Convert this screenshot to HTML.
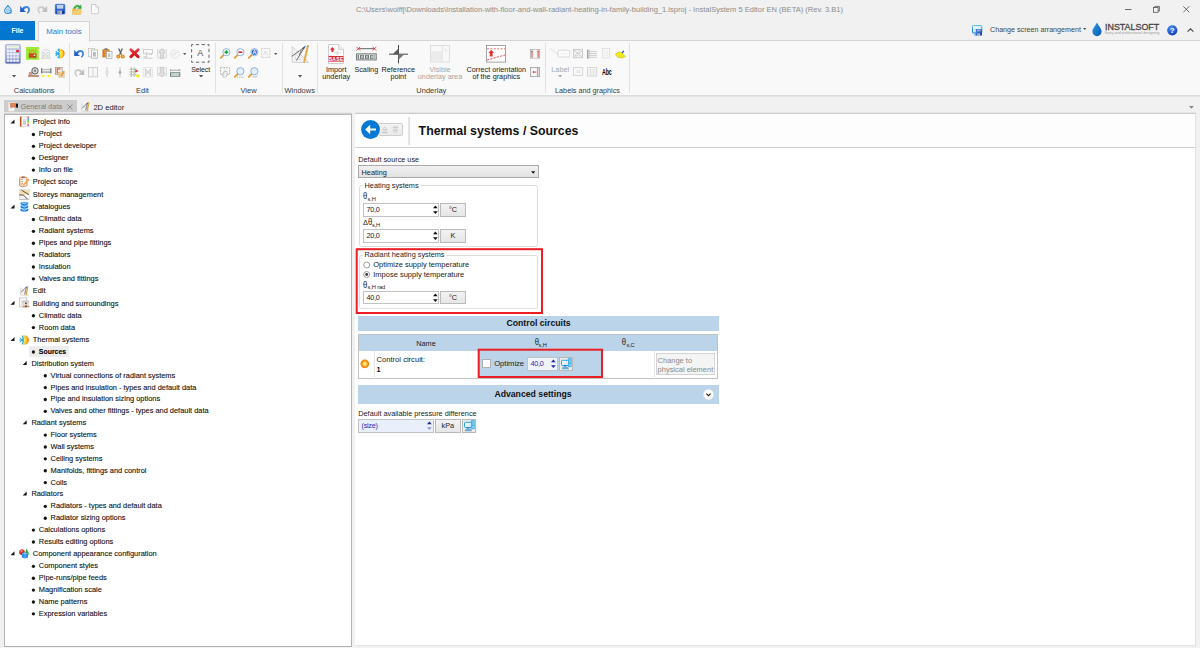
<!DOCTYPE html>
<html lang="en"><head><meta charset="utf-8"><title>InstalSystem 5 Editor</title>
<style>

html,body{margin:0;padding:0;}
body{width:1200px;height:648px;position:relative;overflow:hidden;background:#f1f1f1;font-family:"Liberation Sans",sans-serif;font-size:7.3px;color:#1a1a1a;line-height:9px;}
.a{position:absolute;white-space:nowrap;}
.c{position:absolute;white-space:nowrap;text-align:center;transform:translateX(-50%);}
svg{position:absolute;overflow:visible;}
#title{left:356px;top:5px;color:#8c8c8c;font-size:7.55px;}
#ribbon{left:0;top:40px;width:1200px;height:54px;background:#f9f9f9;border-top:1px solid #d4d4d4;border-bottom:1px solid #dcdcdc;box-shadow:0 1px 0 #e5e5e5;box-sizing:content-box;}
#filetab{left:0;top:21px;width:35px;height:19px;background:#0377cf;color:#fff;text-align:center;line-height:19.6px;font-size:6.95px;font-weight:bold;}
#maintab{left:38px;top:21px;width:50px;height:20px;background:#f9f9f9;border:1px solid #d4d4d4;border-bottom:none;color:#2a7bd0;text-align:center;line-height:19px;font-size:7.8px;}
.sep{position:absolute;top:43px;width:1px;height:50px;background:#e0e1e1;}
.gl{top:86px;color:#3a3a3a;font-size:7.5px;}
.bl{color:#222;}
.dis{color:#a6a6a6;}
.dd{position:absolute;width:0;height:0;border-left:2px solid transparent;border-right:2px solid transparent;border-top:2.2px solid #555;}
#doctab1{left:4px;top:100px;width:73px;height:14px;background:#cccccc;}
#lp{left:4px;top:114px;width:346px;height:531px;background:#fff;border:1px solid #b2b2b2;border-top-color:#b8b8b8;box-sizing:content-box;box-shadow:0 -1px 0 #d4d4d4,0 -2px 0 #e8e8e8;}
#rp{left:355px;top:113px;width:840px;height:531px;background:#fff;border-top:1px solid #cacaca;border-right:1px solid #e2e2e2;border-bottom:1px solid #e2e2e2;box-shadow:0 -1px 0 #e6e6e6;}
#rph{left:355px;top:114px;width:840px;height:33px;background:#fdfdfd;border-bottom:1px solid #cfcfcf;}
.t{position:absolute;white-space:nowrap;height:12px;line-height:12px;color:#0c0c0c;font-size:7.42px;-webkit-text-stroke:0.09px #0c0c0c;}
.b{position:absolute;width:3.2px;height:3.2px;border-radius:50%;background:#111;}
.ex{position:absolute;width:0;height:0;border-left:4.2px solid transparent;border-bottom:4.2px solid #333;}
.inp{position:absolute;background:#fff;border:1px solid #c2c2c2;box-sizing:border-box;line-height:11px;padding-left:2.5px;color:#222;letter-spacing:-0.3px;}
.btn{position:absolute;background:linear-gradient(#f2f2f2,#e6e6e6);border:1px solid #bababa;box-sizing:border-box;text-align:center;line-height:11.5px;color:#222;}
.grp{position:absolute;border:1px solid #dddddd;border-radius:2.5px;box-sizing:border-box;}
.leg{position:absolute;background:#fff;padding:0 2px;line-height:9px;white-space:nowrap;}
.bh{position:absolute;background:#bcd4e9;text-align:center;font-weight:bold;color:#111;}
.red{position:absolute;border:1.7px solid #e0202a;box-sizing:border-box;}
.sp{position:absolute;width:0;height:0;border-left:1.9px solid transparent;border-right:1.9px solid transparent;}
.spu{border-bottom:2.4px solid #111;}
.spd{border-top:2.4px solid #111;}
sub{font-size:5.7px;vertical-align:baseline;position:relative;top:1.5px;line-height:0;letter-spacing:-0.1px;}
.th{font-size:8.5px;line-height:0;display:inline-block;transform:scaleX(0.9);transform-origin:0 50%;margin-right:-0.5px;}

</style></head>
<body>
<div class="a" id="title">C:\Users\wolffj\Downloads\Installation-with-floor-and-wall-radiant-heating-in-family-building_1.isproj - InstalSystem 5 Editor EN (BETA) (Rev. 3.B1)</div>
<svg style="left:3.6px;top:4.8px" width="8" height="9.2" viewBox="0 0 8 9.2"><path d="M3.9 0.6 C5 2.2 7.3 3.6 7.3 5.6 C7.3 7.4 5.8 8.6 3.9 8.6 C2 8.6 0.6 7.4 0.6 5.6 C0.6 3.6 2.8 2.2 3.9 0.6 Z" fill="none" stroke="#2f8fd8" stroke-width="1.05"/><path d="M5.2 4.4 C3.6 3.4 2.4 4.6 2.6 5.8 C2.8 7 4 7.2 4.6 6.8" fill="none" stroke="#2f8fd8" stroke-width="0.8"/><path d="M4.6 5.6 H7 V8.8 M5.6 6.6 V8.8" stroke="#36a6e4" stroke-width="0.8" fill="none"/></svg>
<svg style="left:20px;top:5px" width="10.4" height="9" viewBox="0 0 10.4 9"><defs><linearGradient id="ug1" x1="0" y1="1" x2="1" y2="0"><stop offset="0" stop-color="#1438bc"/><stop offset="1" stop-color="#4aa4f4"/></linearGradient></defs><path d="M0.2 0.8 L0.2 7 L6 7 L3.9 4.9 C5 2.4 7.8 2.2 8.2 4.6 C8.4 6 8 7 6.9 7.9 L7.3 8.7 C8.9 8 10.1 6.4 10 4.2 C9.8 0 4 0.2 2.3 3.2 Z" fill="url(#ug1)"/></svg>
<svg style="left:37.2px;top:5px" width="10.4" height="9" viewBox="0 0 10.4 9"><defs><linearGradient id="ug2" x1="0" y1="1" x2="1" y2="0"><stop offset="0" stop-color="#b4b4b4"/><stop offset="1" stop-color="#d8d8d8"/></linearGradient></defs><g transform="translate(10.4,0) scale(-1,1)"><path d="M0.2 0.8 L0.2 7 L6 7 L3.9 4.9 C5 2.4 7.8 2.2 8.2 4.6 C8.4 6 8 7 6.9 7.9 L7.3 8.7 C8.9 8 10.1 6.4 10 4.2 C9.8 0 4 0.2 2.3 3.2 Z" fill="url(#ug2)"/></g></svg>
<svg style="left:55px;top:4px" width="10.2" height="10.4" viewBox="0 0 10.2 10.4"><defs><linearGradient id="svg1" x1="0" y1="0" x2="0" y2="1"><stop offset="0" stop-color="#4a8cec"/><stop offset="1" stop-color="#143cb4"/></linearGradient></defs><rect x="0.3" y="0.3" width="9.6" height="9.8" rx="1.1" fill="url(#svg1)" stroke="#2a58c8" stroke-width="0.6"/><rect x="2" y="1" width="6.2" height="3.6" fill="#cfdcf0"/><path d="M2.6 1.8h5M2.6 2.8h5M2.6 3.8h5" stroke="#aebfdc" stroke-width="0.4"/><rect x="2.4" y="6.6" width="4.6" height="3.6" fill="#b9c0cc"/><rect x="3.4" y="7.4" width="1.2" height="2.4" fill="#6a7486"/><rect x="7.6" y="7.2" width="1" height="2" fill="#0c1c54"/></svg>
<svg style="left:72.3px;top:4px" width="11" height="10.6" viewBox="0 0 11 10.6"><path d="M1.4 5.6 C1.4 1.6 5.4 -0.4 8 2 L9 0.8 L9.4 4.8 L5.6 4.6 L6.8 3.2 C5.4 2 3.4 3 3.2 5.6 Z" fill="#2fb040" stroke="#189030" stroke-width="0.3"/><path d="M5.8 1 C4.6 1 3.4 1.8 2.8 3" stroke="#9ae8a0" stroke-width="0.6" fill="none"/><path d="M0.3 4.6 H3.4 L4.2 5.6 H9 V10.3 H0.3 Z" fill="#e8b64a"/><path d="M0.3 10.3 L1.8 6.6 H10.6 L9 10.3 Z" fill="#f4d070"/><path d="M0.3 10.3 H9" stroke="#d8a83a" stroke-width="0.4"/></svg>
<svg style="left:91.2px;top:4.3px" width="8" height="10.2" viewBox="0 0 8 10.2"><path d="M0.5 0.5 H4.8 L7.4 3.1 V9.7 H0.5 Z" fill="#fcfcfc" stroke="#c6c6c6" stroke-width="0.9"/><path d="M4.8 0.5 V3.1 H7.4" fill="#f0f0f0" stroke="#c6c6c6" stroke-width="0.7"/><path d="M2.6 6h2.4v-1.4" stroke="#e6e6e6" stroke-width="0.6" fill="none"/></svg>
<svg style="left:1125px;top:9px" width="7" height="1" viewBox="0 0 7 1"><rect x="0" y="0" width="6.5" height="0.8" fill="#4a4a4a"/></svg>
<svg style="left:1153.4px;top:5.8px" width="7" height="7" viewBox="0 0 7 7"><rect x="0.4" y="1.6" width="4.7" height="4.7" fill="none" stroke="#4a4a4a" stroke-width="0.75"/><path d="M1.8 1.6 V0.4 H6.4 V5 H5.1" fill="none" stroke="#4a4a4a" stroke-width="0.75"/></svg>
<svg style="left:1182.6px;top:6px" width="6.6" height="6.6" viewBox="0 0 6.6 6.6"><path d="M0.3 0.3 L6.3 6.3 M6.3 0.3 L0.3 6.3" stroke="#4a4a4a" stroke-width="0.8" fill="none"/></svg>
<div class="a" id="ribbon"></div>
<div class="a" id="filetab">File</div>
<div class="a" id="maintab">Main tools</div>
<svg style="left:971.6px;top:24.6px" width="10.8" height="10.8" viewBox="0 0 10.8 10.8"><defs><linearGradient id="mon1" x1="0" y1="0" x2="0" y2="1"><stop offset="0" stop-color="#4ab8ea"/><stop offset="1" stop-color="#0a74c6"/></linearGradient><linearGradient id="mon2" x1="0" y1="0" x2="1" y2="1"><stop offset="0" stop-color="#ffffff"/><stop offset="1" stop-color="#b4e2fa"/></linearGradient><linearGradient id="flp" x1="0" y1="0" x2="1" y2="1"><stop offset="0" stop-color="#5e9aea"/><stop offset="1" stop-color="#0a38ac"/></linearGradient></defs><rect x="0.5" y="0.6" width="9.3" height="7.4" rx="0.8" fill="url(#mon2)" stroke="url(#mon1)" stroke-width="1"/><path d="M2.2 9.9 H5" stroke="#2a96d8" stroke-width="0.9"/><rect x="3.7" y="4" width="6.3" height="6.5" rx="0.6" fill="url(#flp)"/><rect x="5.1" y="4.6" width="3.6" height="1.7" fill="#a4aec4"/><rect x="5.4" y="8.5" width="2.6" height="2" fill="#ececec"/><path d="M6.2 8.7 V10.4 M7.1 8.7 V10.4" stroke="#555" stroke-width="0.4"/><circle cx="4.5" cy="4.9" r="0.5" fill="#1a3cc0"/></svg>
<div class="a" style="left:990px;top:25.7px;color:#444;font-size:7.15px">Change screen arrangement</div>
<svg style="left:1083px;top:28.4px" width="3.4" height="2" viewBox="0 0 3.4 2"><path d="M0 0 H3.4 L1.7 1.9 Z" fill="#555"/></svg>
<svg style="left:1092px;top:21.5px" width="10" height="14.5" viewBox="0 0 10 14.5"><defs><linearGradient id="dg" x1="0" y1="0" x2="1" y2="1"><stop offset="0" stop-color="#2a9be8"/><stop offset="1" stop-color="#0a58b0"/></linearGradient></defs><path d="M5 0.3 C6 3.4 9.6 6.4 9.6 9.6 A4.6 4.6 0 0 1 0.4 9.6 C0.4 6.4 4 3.4 5 0.3 Z" fill="url(#dg)"/></svg>
<svg style="left:1104px;top:21.3px" width="58" height="15" viewBox="0 0 58 15"><text x="1" y="9" font-size="9.7" font-family="Liberation Sans, sans-serif" fill="#484444" stroke="#484444" stroke-width="0.32" textLength="54.2" lengthAdjust="spacingAndGlyphs">INSTALSOFT</text><text x="1" y="12.9" font-size="3.6" font-family="Liberation Sans, sans-serif" fill="#9c9c9c" textLength="54.4" lengthAdjust="spacingAndGlyphs">Easy and professional designing</text></svg>
<svg style="left:1166.5px;top:24.8px" width="10.6" height="10.6" viewBox="0 0 10.6 10.6"><defs><radialGradient id="hg" cx="0.4" cy="0.3" r="0.8"><stop offset="0" stop-color="#4a8cf0"/><stop offset="1" stop-color="#0c36b4"/></radialGradient></defs><circle cx="5.3" cy="5.3" r="5.1" fill="url(#hg)"/><text x="5.3" y="8.2" font-size="8" font-weight="bold" fill="#fff" text-anchor="middle" font-family="Liberation Sans, sans-serif">?</text></svg>
<svg style="left:1186.5px;top:28px" width="7" height="4" viewBox="0 0 7 4"><path d="M0.6 3.6 L3.5 0.8 L6.4 3.6" fill="none" stroke="#444" stroke-width="1.1"/></svg>
<div class="sep" style="left:69px"></div>
<div class="sep" style="left:215px"></div>
<div class="sep" style="left:282px"></div>
<div class="sep" style="left:317px"></div>
<div class="sep" style="left:545px"></div>
<div class="sep" style="left:629px"></div>
<div class="c gl" style="left:34.2px;top:86px;">Calculations</div>
<div class="c gl" style="left:142.5px;top:86px;">Edit</div>
<div class="c gl" style="left:248.5px;top:86px;">View</div>
<div class="c gl" style="left:299.7px;top:86px;">Windows</div>
<div class="c gl" style="left:431.3px;top:86px;">Underlay</div>
<div class="c gl" style="left:587.5px;top:86px;font-size:7.25px">Labels and graphics</div>
<svg style="left:5.4px;top:44px" width="15.8" height="20" viewBox="0 0 15.8 20"><defs><linearGradient id="cg" x1="0" y1="0" x2="0" y2="1"><stop offset="0" stop-color="#d2d8f2"/><stop offset="0.5" stop-color="#a8b2e0"/><stop offset="1" stop-color="#6c7cc0"/></linearGradient></defs><rect x="0.4" y="0.4" width="15" height="19.2" rx="1.4" fill="url(#cg)" stroke="#8a94cc" stroke-width="0.6"/><rect x="1.8" y="1.4" width="12.2" height="3" fill="#fbfdf6" stroke="#a8b0c8" stroke-width="0.3"/><path d="M2.4 2.9h11" stroke="#b8d4a8" stroke-width="0.6"/><rect x="1.8" y="5.9" width="2.6" height="2.3" rx="0.4" fill="#eef0fa"/><rect x="4.95" y="5.9" width="2.6" height="2.3" rx="0.4" fill="#eef0fa"/><rect x="8.1" y="5.9" width="2.6" height="2.3" rx="0.4" fill="#eef0fa"/><rect x="11.25" y="5.9" width="2.6" height="2.3" rx="0.4" fill="#e0202c"/><rect x="1.8" y="9.100000000000001" width="2.6" height="2.3" rx="0.4" fill="#eef0fa"/><rect x="4.95" y="9.100000000000001" width="2.6" height="2.3" rx="0.4" fill="#eef0fa"/><rect x="8.1" y="9.100000000000001" width="2.6" height="2.3" rx="0.4" fill="#eef0fa"/><rect x="11.25" y="9.100000000000001" width="2.6" height="2.3" rx="0.4" fill="#eef0fa"/><rect x="1.8" y="12.3" width="2.6" height="2.3" rx="0.4" fill="#eef0fa"/><rect x="4.95" y="12.3" width="2.6" height="2.3" rx="0.4" fill="#eef0fa"/><rect x="8.1" y="12.3" width="2.6" height="2.3" rx="0.4" fill="#eef0fa"/><rect x="11.25" y="12.3" width="2.6" height="2.3" rx="0.4" fill="#eef0fa"/><rect x="1.8" y="15.500000000000002" width="2.6" height="2.3" rx="0.4" fill="#eef0fa"/><rect x="4.95" y="15.500000000000002" width="2.6" height="2.3" rx="0.4" fill="#eef0fa"/><rect x="8.1" y="15.500000000000002" width="2.6" height="2.3" rx="0.4" fill="#eef0fa"/><rect x="11.25" y="15.500000000000002" width="2.6" height="2.3" rx="0.4" fill="#eef0fa"/><path d="M1 18.6 H14.8" stroke="#5a68a8" stroke-width="0.8"/></svg>
<svg style="left:11.9px;top:75.1px" width="4.2" height="2.4" viewBox="0 0 4.2 2.4"><path d="M0 0 H4.2 L2.1 2.4 Z" fill="#555"/></svg>
<svg style="left:26.2px;top:47.2px" width="12.8" height="12.8" viewBox="0 0 12.8 12.8"><rect width="12.8" height="12.8" fill="#9cee36"/><path d="M2.6 6.2 L6.4 3 L10.2 6.2 M4 6 L7.6 2.6 M8.8 6 L5.2 2.6" fill="none" stroke="#e8862a" stroke-width="0.7"/><path d="M3.4 4.6 V2.2 M9.8 4.6 V1.8" stroke="#7a8a1c" stroke-width="0.5"/><path d="M9.8 1.8 L11.4 2.2 L9.8 2.8 Z" fill="#e8d21c"/><rect x="2.8" y="6.4" width="7.6" height="4.2" fill="#cc3a1e"/><path d="M2.8 8.4 H10.4" stroke="#e86a3a" stroke-width="0.5"/><rect x="7.6" y="7.4" width="1.7" height="1.6" fill="#c8e8b0"/><path d="M2.6 10.9 H10.8" stroke="#5a7a1c" stroke-width="0.5"/></svg>
<svg style="left:41.3px;top:48.4px" width="9.8" height="10.8" viewBox="0 0 9.8 10.8"><path d="M1.2 10 V3.6 C2.6 0.6 7.2 0.6 8.6 3.6 V10" fill="#f4f4f4" stroke="#cfcfcf" stroke-width="0.7"/><path d="M5 2 V10" stroke="#e0e0e0" stroke-width="0.7"/><path d="M2.8 4.4v1.2M2.8 7v1.6M6.8 4.4v1.2M6.8 7v1.6M3.6 5.8l1 1.4" stroke="#9a9a9a" stroke-width="0.6"/><path d="M0.2 10.2 H9.6" stroke="#c4c4c4" stroke-width="0.7"/></svg>
<svg style="left:55px;top:48px" width="10" height="11.2" viewBox="0 0 10 11.2"><defs><radialGradient id="sun1" cx="0.12" cy="0.5" r="0.95"><stop offset="0" stop-color="#fff45a"/><stop offset="0.45" stop-color="#ffc820"/><stop offset="0.8" stop-color="#f6801c"/><stop offset="1" stop-color="#f2701c" stop-opacity="0.7"/></radialGradient></defs><path d="M5 0.9 A4.7 4.7 0 0 1 5 10.3 Z" fill="url(#sun1)"/><path d="M4.1 0.6 V10.6 M0.8 3 L4.8 8.2 M0.8 8.2 L4.8 3 M0.3 5.6 H4.8 M2.6 1.4 L4.1 2.8 M2.6 9.8 L4.1 8.4" stroke="#2aace2" stroke-width="1.15" fill="none"/></svg>
<svg style="left:27.5px;top:66.6px" width="10.8" height="10.4" viewBox="0 0 10.8 10.4"><circle cx="7" cy="3.8" r="3.2" fill="#d9d9d9" stroke="#555" stroke-width="0.9"/><circle cx="7" cy="3.8" r="1.2" fill="#888"/><path d="M0.4 9.6 H10.4 V8.2 H0.4 Z" fill="#c58a70" stroke="#8a5a48" stroke-width="0.4"/><path d="M1.2 8.2 V5.4 H4 V8.2" fill="#d9a48c" stroke="#8a5a48" stroke-width="0.4"/></svg>
<svg style="left:40.8px;top:67.6px" width="10.6" height="10" viewBox="0 0 10.6 10"><defs><linearGradient id="pipg" x1="0" y1="0" x2="0" y2="1"><stop offset="0" stop-color="#9aa0a0"/><stop offset="0.4" stop-color="#eef0f0"/><stop offset="1" stop-color="#8a9090"/></linearGradient></defs><rect x="0.9" y="0.9" width="8.8" height="3.8" fill="url(#pipg)"/><path d="M0.7 0.2 V5.4 M9.9 0.2 V5.4" stroke="#56605e" stroke-width="1"/><path d="M0.4 8 L2.6 6.5 V7.4 H4.4 V8.6 H2.6 V9.5 Z" fill="#fff000"/><path d="M6 8 L8.2 6.5 V7.4 H10 V8.6 H8.2 V9.5 Z" fill="#fff000"/></svg>
<svg style="left:55px;top:66.6px" width="10.2" height="10.6" viewBox="0 0 10.2 10.6"><rect x="0.5" y="0.5" width="6.6" height="7" fill="#f7f3ee" stroke="#8c8c8c" stroke-width="0.7"/><path d="M5.4 1.9 H2.2 V6 H4" fill="none" stroke="#e2522a" stroke-width="1.2"/><rect x="3.4" y="4.8" width="6.4" height="5.4" fill="#e2cfb4" opacity="0.92"/><path d="M4.5 9.8 V5.2" stroke="#ecd41c" stroke-width="1.3"/><path d="M6.2 8.8 L9.2 4.2" stroke="#f2941c" stroke-width="1.5"/><path d="M3.4 10.2 H9.8" stroke="#c4a888" stroke-width="0.5"/></svg>
<svg style="left:74.2px;top:49.2px" width="10.4" height="9" viewBox="0 0 10.4 9"><defs><linearGradient id="ug3" x1="0" y1="1" x2="1" y2="0"><stop offset="0" stop-color="#1438bc"/><stop offset="1" stop-color="#4aa4f4"/></linearGradient></defs><path d="M0.2 0.8 L0.2 7 L6 7 L3.9 4.9 C5 2.4 7.8 2.2 8.2 4.6 C8.4 6 8 7 6.9 7.9 L7.3 8.7 C8.9 8 10.1 6.4 10 4.2 C9.8 0 4 0.2 2.3 3.2 Z" fill="url(#ug3)"/></svg>
<svg style="left:74.2px;top:67.6px" width="10.4" height="9" viewBox="0 0 10.4 9"><defs><linearGradient id="ug4" x1="0" y1="1" x2="1" y2="0"><stop offset="0" stop-color="#b4b4b4"/><stop offset="1" stop-color="#d8d8d8"/></linearGradient></defs><g transform="translate(10.4,0) scale(-1,1)"><path d="M0.2 0.8 L0.2 7 L6 7 L3.9 4.9 C5 2.4 7.8 2.2 8.2 4.6 C8.4 6 8 7 6.9 7.9 L7.3 8.7 C8.9 8 10.1 6.4 10 4.2 C9.8 0 4 0.2 2.3 3.2 Z" fill="url(#ug4)"/></g></svg>
<svg style="left:88px;top:48.4px" width="10" height="10.6" viewBox="0 0 10 10.6"><rect x="0.5" y="0.5" width="6" height="8.2" fill="#f6f6f6" stroke="#c4c4c4" stroke-width="0.8"/><rect x="3.4" y="2" width="6" height="8.2" fill="#fbfbfb" stroke="#b4b4b4" stroke-width="0.8"/><rect x="5" y="4" width="2.8" height="4.6" fill="#b8b8b8"/></svg>
<svg style="left:101.6px;top:48.2px" width="10.4" height="10.8" viewBox="0 0 10.4 10.8"><defs><linearGradient id="pg" x1="0" y1="0" x2="1" y2="0"><stop offset="0" stop-color="#c86a10"/><stop offset="0.4" stop-color="#f09a30"/><stop offset="1" stop-color="#d47a18"/></linearGradient></defs><rect x="0.5" y="1.2" width="7" height="8.2" rx="0.7" fill="url(#pg)"/><rect x="2.4" y="0.3" width="3.2" height="1.8" rx="0.5" fill="#7a7a7a"/><rect x="4.6" y="3.6" width="5.4" height="6.8" fill="#fafafa" stroke="#a4a4a4" stroke-width="0.7"/><rect x="6" y="5.4" width="2.4" height="3.6" fill="#c4c4c4"/></svg>
<svg style="left:116px;top:48.4px" width="9" height="10.8" viewBox="0 0 9 10.8"><path d="M2.6 0.6 L5.4 6.4 M6.4 0.6 L3.6 6.4" stroke="#5a5a5a" stroke-width="1.25" fill="none"/><circle cx="2.3" cy="8.5" r="1.5" fill="#f6b45a" stroke="#e0800c" stroke-width="1.1"/><circle cx="6.7" cy="8.5" r="1.5" fill="#f6b45a" stroke="#e0800c" stroke-width="1.1"/></svg>
<svg style="left:129px;top:48.4px" width="11" height="10.6" viewBox="0 0 11 10.6"><defs><linearGradient id="rx" x1="0" y1="0" x2="0" y2="1"><stop offset="0" stop-color="#f05a5a"/><stop offset="0.5" stop-color="#e01c24"/><stop offset="1" stop-color="#b00c14"/></linearGradient></defs><path d="M1.9 1.8 L9.1 8.8 M9.1 1.8 L1.9 8.8" stroke="url(#rx)" stroke-width="2.9" stroke-linecap="round" fill="none"/><path d="M1.9 1.8 L9.1 8.8 M9.1 1.8 L1.9 8.8" stroke="#e42028" stroke-width="2.3" stroke-linecap="round" fill="none" opacity="0.6"/></svg>
<svg style="left:143px;top:48.6px" width="10" height="10.4" viewBox="0 0 10 10.4"><rect x="0.6" y="0.6" width="8.8" height="4.2" fill="#f8f8f8" stroke="#c6c6c6" stroke-width="0.8"/><path d="M3.6 4.8 V9 M0.4 9.2 H9.6 M0.4 7.8 H3 M6.4 5.4 H9" stroke="#c2c2c2" stroke-width="0.8" fill="none"/><rect x="2.6" y="3.4" width="2" height="1.4" fill="#cfcfcf"/></svg>
<svg style="left:157px;top:48.4px" width="10" height="10.8" viewBox="0 0 10 10.8"><rect x="0.5" y="2" width="9" height="8" fill="#f4f4f4" stroke="#d2d2d2" stroke-width="0.7"/><path d="M3.4 10.4 V4.4 H1.8 L5 0.6 L8.2 4.4 H6.6 V10.4 Z" fill="#ececec" stroke="#bcbcbc" stroke-width="0.7"/><path d="M5 1.6 V10" stroke="#c8c8c8" stroke-width="0.6"/></svg>
<svg style="left:170.4px;top:48.8px" width="10" height="10" viewBox="0 0 10 10"><circle cx="5" cy="5" r="4.4" fill="#f6f6f6" stroke="#e2e2e2" stroke-width="0.8"/><path d="M2.4 7 C3.2 4.2 5.2 3 7.6 3.4 M4 6 L6.4 4" stroke="#e0e0e0" stroke-width="0.8" fill="none"/></svg>
<svg style="left:182.9px;top:52.6px" width="3.4" height="2" viewBox="0 0 3.4 2"><path d="M0 0 H3.4 L1.7 1.9 Z" fill="#555"/></svg>
<svg style="left:88px;top:67px" width="10" height="10.4" viewBox="0 0 10 10.4"><rect x="0.5" y="0.5" width="9" height="9.4" fill="#f6f6f6" stroke="#c8c8c8" stroke-width="0.8"/><path d="M5 0.5 V9.9" stroke="#c8c8c8" stroke-width="0.7"/></svg>
<svg style="left:103.6px;top:67px" width="6" height="10.4" viewBox="0 0 6 10.4"><path d="M3 0 V10.4" stroke="#c6c6c6" stroke-width="0.8"/><path d="M3 3 L4.6 5.2 L3 7.4 L1.4 5.2 Z" fill="#f4f4f4" stroke="#c0c0c0" stroke-width="0.6"/></svg>
<svg style="left:117.4px;top:67px" width="6" height="10.4" viewBox="0 0 6 10.4"><path d="M3 0 V10.4" stroke="#bdbdbd" stroke-width="0.8"/><path d="M3 3.4 L4.2 5.2 L3 7 L1.8 5.2 Z" fill="#aaa" stroke="#a4a4a4" stroke-width="0.6"/></svg>
<svg style="left:129px;top:66.8px" width="11" height="10.6" viewBox="0 0 11 10.6"><path d="M0.6 2.2 H8 M0.6 5 H8 M0.6 7.8 H8 M2.4 0.4 V10 M5.2 0.4 V10" stroke="#6a8f6a" stroke-width="0.7" stroke-dasharray="1.2 0.6" fill="none"/><path d="M6.4 2.4 L9.6 4 L6.4 5.6 Z" fill="#e0282a"/><rect x="7.4" y="7.6" width="3" height="2.6" fill="#ffe600"/></svg>
<svg style="left:143px;top:67px" width="10" height="10.4" viewBox="0 0 10 10.4"><rect x="0.5" y="0.5" width="9" height="9.4" fill="#f8f8f8" stroke="#cfcfcf" stroke-width="0.7" stroke-dasharray="1.6 1"/><path d="M2.4 1.6 L5 5.2 L2.4 8.8 Z M7.6 1.6 L5 5.2 L7.6 8.8 Z" fill="#e6e6e6" stroke="#bdbdbd" stroke-width="0.6"/></svg>
<svg style="left:157px;top:66.8px" width="10" height="10.8" viewBox="0 0 10 10.8"><rect x="0.5" y="0.8" width="9" height="8" fill="#f4f4f4" stroke="#d2d2d2" stroke-width="0.7"/><path d="M3.4 0.4 V6.4 H1.8 L5 10.2 L8.2 6.4 H6.6 V0.4 Z" fill="#ececec" stroke="#bcbcbc" stroke-width="0.7"/><path d="M5 0.8 V9.2" stroke="#c8c8c8" stroke-width="0.6"/></svg>
<svg style="left:170.2px;top:68.6px" width="10.4" height="8" viewBox="0 0 10.4 8"><path d="M0.6 1.2 H9.8 M0.6 0.2 V2.2 M9.8 0.2 V2.2" stroke="#7a8a8a" stroke-width="0.7" fill="none"/><rect x="0.6" y="3.8" width="9.2" height="3.4" fill="#f4f8f6" stroke="#4f6a68" stroke-width="0.9"/><path d="M1.6 5.5 H8.8" stroke="#9ab0ac" stroke-width="1" stroke-dasharray="1.2 0.8"/></svg>
<svg style="left:191.4px;top:44.2px" width="18.6" height="18.8" viewBox="0 0 18.6 18.8"><rect x="0.6" y="0.6" width="17.4" height="17.6" fill="none" stroke="#555" stroke-width="0.9" stroke-dasharray="3.3 2.5" stroke-dashoffset="1.6"/><text x="9.3" y="12.4" font-size="9" fill="#555" text-anchor="middle" font-family="Liberation Sans, sans-serif">A</text></svg>
<div class="c bl" style="left:200.6px;top:65.2px;font-size:7px;letter-spacing:-0.12px">Select</div>
<svg style="left:198.5px;top:75.1px" width="4.2" height="2.4" viewBox="0 0 4.2 2.4"><path d="M0 0 H4.2 L2.1 2.4 Z" fill="#555"/></svg>
<svg style="left:220px;top:48px" width="10.6" height="10.6" viewBox="0 0 10.6 10.6"><path d="M0.8 9.8 L4 6.6" stroke="#e39a2c" stroke-width="1.7" stroke-linecap="round"/><circle cx="6.4" cy="4.2" r="3.6" fill="#f4f9fe" stroke="#7aa2d0" stroke-width="0.8"/><path d="M4.5 4.2h3.8M6.4 2.3v3.8" stroke="#1fa030" stroke-width="1.5"/></svg>
<svg style="left:233.7px;top:48px" width="10.6" height="10.6" viewBox="0 0 10.6 10.6"><path d="M0.8 9.8 L4 6.6" stroke="#e39a2c" stroke-width="1.7" stroke-linecap="round"/><circle cx="6.4" cy="4.2" r="3.6" fill="#f4f9fe" stroke="#7aa2d0" stroke-width="0.8"/><path d="M4.4 4.2h4" stroke="#d81c24" stroke-width="1.5"/></svg>
<svg style="left:247.5px;top:48px" width="10.6" height="10.6" viewBox="0 0 10.6 10.6"><path d="M0.8 9.8 L4 6.6" stroke="#e39a2c" stroke-width="1.7" stroke-linecap="round"/><circle cx="6.4" cy="4.2" r="3.6" fill="#f4f9fe" stroke="#7aa2d0" stroke-width="0.8"/><circle cx="6.4" cy="4.2" r="2.6" fill="#2a62d4"/><text x="6.4" y="6.2" font-size="5.4" font-weight="bold" fill="#fff" text-anchor="middle" font-family="Liberation Sans, sans-serif">A</text></svg>
<svg style="left:261px;top:48.4px" width="9.4" height="10" viewBox="0 0 9.4 10"><rect x="0.5" y="0.5" width="8.4" height="9" fill="#f6f6f6" stroke="#c4c4c4" stroke-width="0.8" stroke-dasharray="1.6 1"/><path d="M2.4 6.8 L4.4 3.4 L6.4 6.8" stroke="#d0d0d0" stroke-width="0.7" fill="none"/></svg>
<svg style="left:273.7px;top:52.6px" width="3.4" height="2" viewBox="0 0 3.4 2"><path d="M0 0 H3.4 L1.7 1.9 Z" fill="#555"/></svg>
<svg style="left:220px;top:66.8px" width="10.4" height="10.4" viewBox="0 0 10.4 10.4"><rect x="0.6" y="0.6" width="9" height="7" fill="none" stroke="#9a9a9a" stroke-width="0.8" stroke-dasharray="1.6 1.2"/><path d="M3 10 V6.4 C3 5.4 4 5.4 4 6.2 V4.6 C4 3.8 5 3.8 5 4.6 V4.4 C5 3.6 6 3.6 6 4.4 V4.8 C6 4.2 7 4.2 7 5 V8 C7 9 6.4 10 5.6 10 Z" fill="#f2f2f2" stroke="#a8a8a8" stroke-width="0.6"/></svg>
<svg style="left:233.7px;top:66.6px" width="10.6" height="10.6" viewBox="0 0 10.6 10.6"><path d="M0.8 9.8 L4 6.6" stroke="#e39a2c" stroke-width="1.7" stroke-linecap="round"/><circle cx="6.4" cy="4.2" r="3.6" fill="#e4f0fb" stroke="#7aa2d0" stroke-width="0.8"/><path d="M3 10.2 H10" stroke="#8a8a8a" stroke-width="0.7" stroke-dasharray="1 0.8"/></svg>
<svg style="left:247.5px;top:66.6px" width="10.6" height="10.6" viewBox="0 0 10.6 10.6"><path d="M0.8 9.8 L4 6.6" stroke="#e39a2c" stroke-width="1.7" stroke-linecap="round"/><circle cx="6.4" cy="4.2" r="3.6" fill="#e4f0fb" stroke="#7aa2d0" stroke-width="0.8"/><path d="M4.6 9.4 C6 10.4 8.6 10.2 9.8 8.8" stroke="#9a9a9a" stroke-width="0.7" fill="none"/></svg>
<svg style="left:290.6px;top:44.8px" width="19" height="19.4" viewBox="0 0 19 19.4"><path d="M1.2 1.6 V17.4 H17.6 Z" fill="#f3f3f3" stroke="#cdcdcd" stroke-width="0.9"/><path d="M4.6 9 V14.4 H10.4 Z" fill="#fbfbfb" stroke="#d6d6d6" stroke-width="0.7"/><path d="M17.6 0.8 L14.2 15.6 L13 18 L12.8 15.4 L16.2 0.4 Z" fill="#f0b43c" stroke="#c98a1c" stroke-width="0.4"/><path d="M17.6 0.8 L16.2 0.4 L16 1.4 L17.4 1.8 Z" fill="#e07a6a"/><path d="M13.6 2 L0.8 11.4" stroke="#505050" stroke-width="0.85"/><path d="M13.6 2 L5.4 15.6" stroke="#505050" stroke-width="0.85"/><path d="M10.6 5.4 L8.4 10" stroke="#8a8a8a" stroke-width="1.3"/><path d="M15 0.4 L11.2 3 L12.8 4.6 Z" fill="#2a5fb8"/></svg>
<svg style="left:297.9px;top:75.1px" width="4.2" height="2.4" viewBox="0 0 4.2 2.4"><path d="M0 0 H4.2 L2.1 2.4 Z" fill="#555"/></svg>
<svg style="left:328.4px;top:44px" width="16" height="20" viewBox="0 0 16 20"><path d="M0.5 0.5 H10.6 L15.5 5.4 V19.5 H0.5 Z" fill="#fdfdfd" stroke="#c4c4c4" stroke-width="0.8"/><path d="M10.6 0.5 V5.4 H15.5" fill="#efefef" stroke="#c4c4c4" stroke-width="0.7"/><path d="M4.4 3 L6.8 5.8 H5.4 V8 H3.4 V5.8 H2 Z" fill="#e02a2a"/><circle cx="9.4" cy="8.8" r="1.3" fill="#fff" stroke="#c8c8c8" stroke-width="0.5"/><path d="M6 8.8 H13.4 M9.4 6 V11.4" stroke="#d2d2d2" stroke-width="0.5"/><rect x="0.5" y="12" width="15" height="5.6" fill="#d62a30"/><text x="8" y="16.6" font-size="5" font-weight="bold" fill="#fff" text-anchor="middle" font-family="Liberation Sans, sans-serif" letter-spacing="0.3">BASE</text></svg>
<div class="c bl" style="left:336.2px;top:65.2px;font-size:7.25px;line-height:7px;margin-top:1px">Import<br>underlay</div>
<svg style="left:355.8px;top:45.6px" width="20.8" height="14.6" viewBox="0 0 20.8 14.6"><path d="M2 2.7 H18.8" stroke="#3a3a3a" stroke-width="0.8"/><path d="M0.4 0.8 L4.2 4.6 M4.2 0.8 L0.4 4.6 M16.6 0.8 L20.4 4.6 M20.4 0.8 L16.6 4.6" stroke="#e8282c" stroke-width="0.8"/><rect x="0.6" y="7.9" width="19.6" height="6" fill="#fff" stroke="#5a6464" stroke-width="0.9"/><rect x="1.6" y="8.9" width="17.6" height="4" fill="#70787a"/><path d="M3.4 9 v3.8 M6 9.6 v2.6 M8.4 9 v3.8 M11 9.6 v2.6 M13.6 9 v3.8 M16 9.6v2.6 M18 9v3.8" stroke="#fff" stroke-width="1"/></svg>
<div class="c bl" style="left:366.3px;top:65.2px;font-size:7.25px">Scaling</div>
<svg style="left:389px;top:45px" width="19" height="18.4" viewBox="0 0 19 18.4"><path d="M9.5 0 V18.4 M0 9.2 H19" stroke="#333" stroke-width="0.9"/><path d="M9.5 9.2 H3.6 L9.5 3.6 Z" fill="#5a5a5a"/><path d="M9.5 9.2 H15.4 L9.5 14.8 Z" fill="#7a7a7a"/></svg>
<div class="c bl" style="left:398.3px;top:65.2px;font-size:7.25px;line-height:7px;margin-top:1px">Reference<br>point</div>
<svg style="left:430px;top:45px" width="20" height="17.6" viewBox="0 0 20 17.6"><rect x="0.5" y="0.5" width="19" height="16.6" fill="#f7f7f7" stroke="#d8d8d8" stroke-width="0.8"/><rect x="0.9" y="6" width="11.4" height="10.8" fill="#ebebeb"/><path d="M12.4 0.5 V17 " stroke="#dcdcdc" stroke-width="0.6"/><path d="M14.4 5.4 H17.4 M12.4 3 L13.4 3" stroke="#d4d4d4" stroke-width="0.6"/></svg>
<div class="c dis" style="left:440px;top:65.2px;font-size:7.25px;line-height:7px;margin-top:1px">Visible<br>underlay area</div>
<svg style="left:486px;top:45px" width="20" height="17.6" viewBox="0 0 20 17.6"><rect x="0.5" y="0.5" width="19" height="16.6" fill="#fff" stroke="#8e8e8e" stroke-width="0.8"/><path d="M1 3.8 H19" stroke="#e66a6a" stroke-width="1" stroke-dasharray="2 1.4"/><path d="M1 15 L19 10" stroke="#e03a3a" stroke-width="0.9" stroke-dasharray="2.2 1.2"/><path d="M5.2 4.8 L8 8 H6.6 V11.4 H3.8 V8 H2.4 Z" fill="#e0322e"/></svg>
<div class="c bl" style="left:496.3px;top:65.2px;font-size:7.25px;line-height:7px;margin-top:1px">Correct orientation<br>of the graphics</div>
<svg style="left:530.3px;top:49px" width="10.2" height="9.6" viewBox="0 0 10.2 9.6"><rect x="0.5" y="0.5" width="9.2" height="8.6" fill="#dcdcdc" stroke="#a8a8a8" stroke-width="0.7"/><rect x="3.4" y="0.8" width="3.4" height="8" fill="#fafafa"/><path d="M2 2 V8.4 M8.2 2 V8.4" stroke="#e04a3a" stroke-width="0.8"/><path d="M2 1.4 L1 3 H3 Z M8.2 1.4 L7.2 3 H9.2 Z" fill="#e04a3a"/></svg>
<svg style="left:530.3px;top:66.8px" width="10.2" height="10.2" viewBox="0 0 10.2 10.2"><rect x="0.5" y="0.5" width="9.2" height="9.2" fill="#e8e8e8" stroke="#9a9a9a" stroke-width="0.7"/><rect x="1.6" y="1.4" width="5" height="7.4" fill="#fafafa"/><path d="M7.8 0.8 V9.4" stroke="#8a8a8a" stroke-width="0.8"/><path d="M3 5.1 H6.4" stroke="#e03a3a" stroke-width="0.9"/><path d="M2.4 5.1 L4.2 3.8 V6.4 Z" fill="#e03a3a"/></svg>
<svg style="left:550px;top:48.4px" width="20.4" height="9.6" viewBox="0 0 20.4 9.6"><path d="M0.2 0.4 L8 6.4" stroke="#d0d0d0" stroke-width="0.7"/><rect x="8.2" y="2.2" width="11.6" height="6.8" rx="0.8" fill="#fcfcfc" stroke="#d2d2d2" stroke-width="0.8"/><path d="M11.4 5.8h1M13.6 5.8h1M15.8 5.8h1" stroke="#d0d0d0" stroke-width="0.7"/></svg>
<svg style="left:573.3px;top:48.4px" width="10.6" height="10.4" viewBox="0 0 10.6 10.4"><rect x="0.5" y="1.4" width="9" height="8.4" fill="#f2f2f2" stroke="#c2c2c2" stroke-width="0.8"/><path d="M0.8 1.8 L9.2 9.4 M2.6 6.8 L8.8 0.8 L10 2 L4 7.8 L2.2 8.2 Z" stroke="#c2c2c2" stroke-width="0.7" fill="#f6f6f6"/></svg>
<svg style="left:587px;top:48.6px" width="10.6" height="10.2" viewBox="0 0 10.6 10.2"><path d="M0.8 0.4 V9.8" stroke="#9a9a9a" stroke-width="1.4"/><path d="M2.4 2.4H10M2.4 4.4H10M2.4 6.4H10M2.4 8.4H10" stroke="#c4c4c4" stroke-width="0.8"/><path d="M2.6 0.6 V9.6" stroke="#c4c4c4" stroke-width="0.7"/></svg>
<svg style="left:602px;top:48.4px" width="8.4" height="10.4" viewBox="0 0 8.4 10.4"><rect x="0.5" y="0.5" width="7.2" height="9.4" fill="#f9f9f9" stroke="#dcdcdc" stroke-width="0.8"/><path d="M2 3h1.2M4.4 3h1.6M2 5.2h1.2M4.4 5.2h1.6M2 7.4h1.2M4.4 7.4h1.6" stroke="#dadada" stroke-width="0.7"/></svg>
<svg style="left:614.6px;top:50px" width="11" height="8.4" viewBox="0 0 11 8.4"><path d="M0.4 4.2 L3.4 2 L7.4 2.8 L8.2 4.4 L10.6 6.6 L6.8 8 L2.6 7.2 Z" fill="#f2ea16" stroke="#b9b000" stroke-width="0.5"/><path d="M6.6 2.4 L8.4 0.4 L9.2 1.2 L7.8 3.2 Z" fill="#234a9a"/></svg>
<div class="c dis" style="left:560.2px;top:65.2px;font-size:7.25px">Label</div>
<svg style="left:558.1px;top:75.2px" width="4.2" height="2.4" viewBox="0 0 4.2 2.4"><path d="M0 0 H4.2 L2.1 2.4 Z" fill="#a8a8a8"/></svg>
<svg style="left:573.3px;top:67.4px" width="10.4" height="9" viewBox="0 0 10.4 9"><rect x="0.5" y="0.5" width="9.2" height="8" fill="#f8f8f8" stroke="#d0d0d0" stroke-width="0.8"/><text x="5.1" y="6.4" font-size="4" fill="#c2c2c2" text-anchor="middle" font-family="Liberation Sans, sans-serif">#1</text></svg>
<svg style="left:587px;top:67.2px" width="10.4" height="9.6" viewBox="0 0 10.4 9.6"><rect x="0.5" y="0.5" width="9.2" height="8.6" fill="#fbfbfb" stroke="#d0d0d0" stroke-width="0.8"/><path d="M0.5 2.8H9.7M0.5 5H9.7M0.5 7.2H9.7M3.6 0.5V9.1M6.6 2.8V9.1" stroke="#d6d6d6" stroke-width="0.6"/></svg>
<div class="a" style="left:601.3px;top:67px;width:10.2px;height:10.4px;background:#fff"></div>
<div class="a" style="left:602px;top:67.4px;font-size:9.6px;font-weight:bold;color:#000;line-height:10px;transform:scaleX(0.55);transform-origin:0 0;letter-spacing:-0.2px">Abc</div>
<div class="a" id="doctab1"></div>
<svg style="left:8px;top:102px" width="10.6" height="9.6" viewBox="0 0 10.6 9.6"><rect x="0.4" y="0.6" width="6" height="8.6" fill="#f6f6f6" stroke="#d8d8d8" stroke-width="0.5"/><path d="M1.2 2.4h2M1.2 4.4h2M1.2 6.4h2M1.2 8h4" stroke="#eee" stroke-width="0.7"/><path d="M2 1 H7.6 V5.4 H4.4 L3.6 6.4 L2.6 5.4 H2 Z" fill="#e0855a"/><rect x="7.8" y="1.6" width="2.2" height="4" fill="#161616"/></svg>
<div class="a" style="left:20.8px;top:102.8px;color:#7c7c7c;font-size:7.15px">General data</div>
<svg style="left:66.8px;top:104.2px" width="6" height="6" viewBox="0 0 6 6"><path d="M0.4 0.4 L5.4 5.4 M5.4 0.4 L0.4 5.4" stroke="#7a7a7a" stroke-width="0.75" fill="none"/></svg>
<svg style="left:81px;top:102.4px" width="9.6" height="9.8" viewBox="0 0 9.6 9.8"><path d="M0.6 1.6 V9.2 H8.6 Z" fill="#f3f3f3" stroke="#cfcfcf" stroke-width="0.6"/><path d="M8.2 0.4 L6.8 8 L6.2 9.4 L6 8 L7.4 0.4 Z" fill="#f0b43c" stroke="#c98a1c" stroke-width="0.35"/><path d="M6.4 1.2 L0.8 6.4 M6.4 1.2 L4.6 8.6" stroke="#555" stroke-width="0.7"/><path d="M6.9 0.3 L5.3 1.6 L6.3 2.4 Z" fill="#2a5fb8"/></svg>
<div class="a" style="left:93.4px;top:102.8px;color:#222;font-size:7.6px">2D editor</div>
<svg style="left:1188.8px;top:106.2px" width="4.8" height="3" viewBox="0 0 4.8 3"><path d="M0 0 H4.8 L2.4 2.7 Z" fill="#858585"/></svg>
<div class="a" id="lp"></div>
<svg style="left:19px;top:116.2px" width="11" height="11" viewBox="0 0 11 11"><defs><linearGradient id="bkg" x1="0" y1="0" x2="0" y2="1"><stop offset="0" stop-color="#e2e2e2"/><stop offset="1" stop-color="#c2c2c2"/></linearGradient></defs><rect x="2.2" y="0.9" width="6.6" height="9.5" fill="#fafafa" stroke="#c9c9c9" stroke-width="0.7"/><rect x="0.9" y="0.6" width="1.5" height="10.1" rx="0.4" fill="#b8561a"/><rect x="4" y="2.8" width="3" height="5.8" fill="url(#bkg)"/><rect x="8.5" y="0.7" width="1.5" height="1.7" fill="#e8555a"/><rect x="8.5" y="2.4" width="1.5" height="2" fill="#4aa8f4"/><rect x="8.5" y="4.4" width="1.5" height="2" fill="#5ac84a"/><rect x="8.5" y="6.4" width="1.5" height="2" fill="#f4d23a"/><rect x="8.5" y="8.4" width="1.5" height="1.7" fill="#d24ab8"/></svg>
<div class="t" style="left:32.8px;top:116.25px">Project info</div>
<div class="t" style="left:38.8px;top:128.44px">Project</div>
<div class="t" style="left:38.8px;top:140.31px">Project developer</div>
<div class="t" style="left:38.8px;top:152.19px">Designer</div>
<div class="t" style="left:38.8px;top:164.06px">Info on file</div>
<svg style="left:19px;top:176.2px" width="11" height="11" viewBox="0 0 11 11"><rect x="0.7" y="1.2" width="7.2" height="9" rx="1" fill="#fdf4ea" stroke="#cc8040" stroke-width="0.95"/><rect x="2.7" y="0.5" width="3.2" height="1.5" rx="0.5" fill="#9a6a4a"/><path d="M2 3.3l0.7 0.7 1-1.3M2 7.7l0.7 0.7 1-1.3" stroke="#e0303a" stroke-width="0.7" fill="none"/><path d="M2 5.5l0.7 0.7 1-1.3" stroke="#2aa040" stroke-width="0.7" fill="none"/><path d="M4.6 3.6h1.8M4.6 5.8h1.2" stroke="#d8d8d8" stroke-width="0.6"/><path d="M9.2 3.4 L10 4.2 L5.4 8.8 L4.2 9.2 L4.6 8 Z" fill="#f2ae38" stroke="#c8862a" stroke-width="0.35"/><path d="M9.2 3.4 L10 4.2 L10.5 3.3 L10 2.8 Z" fill="#e0503a"/></svg>
<div class="t" style="left:32.8px;top:176.25px">Project scope</div>
<svg style="left:19px;top:188.7px" width="11" height="11" viewBox="0 0 11 11"><rect x="0.3" y="0.5" width="10" height="10" fill="#fbfbfb" stroke="#d0d0d0" stroke-width="0.5"/><path d="M0.4 1 H10.2 V5.6 L7.4 5.6 L4.3 6 H0.4 Z" fill="#f3dcae"/><path d="M2.4 1 L9.8 5.7" stroke="#3c3c3c" stroke-width="0.9" fill="none"/><path d="M0.3 6 H4.3 L8.3 10" stroke="#3c3c3c" stroke-width="0.9" fill="none"/><path d="M0.3 10.3 H10.3" stroke="#a8a8a8" stroke-width="0.8"/><path d="M0.3 8 H5.6" stroke="#dadada" stroke-width="0.6"/></svg>
<div class="t" style="left:32.8px;top:188.75px">Storeys management</div>
<svg style="left:19px;top:201.2px" width="11" height="11" viewBox="0 0 11 11"><defs><linearGradient id="dbg" x1="0" y1="0" x2="0" y2="1"><stop offset="0" stop-color="#38a4ff"/><stop offset="1" stop-color="#0a6fd8"/></linearGradient></defs><path d="M1.5 1.8 C1.5 0.6000000000000001 9.2 0.6000000000000001 9.2 1.8 V3.0 C9.2 4.4 1.5 4.4 1.5 3.0 Z" fill="url(#dbg)"/><path d="M3 1.6 L5.35 2.8 L7.7 1.6" stroke="#e8f4ff" stroke-width="0.8" fill="none"/><path d="M1.5 5.0 C1.5 3.8 9.2 3.8 9.2 5.0 V6.199999999999999 C9.2 7.6 1.5 7.6 1.5 6.199999999999999 Z" fill="url(#dbg)"/><path d="M3 4.8 L5.35 6.0 L7.7 4.8" stroke="#e8f4ff" stroke-width="0.8" fill="none"/><path d="M1.5 8.2 C1.5 7.0 9.2 7.0 9.2 8.2 V9.4 C9.2 10.8 1.5 10.8 1.5 9.4 Z" fill="url(#dbg)"/><path d="M3 8.0 L5.35 9.2 L7.7 8.0" stroke="#e8f4ff" stroke-width="0.8" fill="none"/></svg>
<div class="t" style="left:32.8px;top:201.25px">Catalogues</div>
<div class="t" style="left:38.8px;top:213.44px">Climatic data</div>
<div class="t" style="left:38.8px;top:225.31px">Radiant systems</div>
<div class="t" style="left:38.8px;top:237.19px">Pipes and pipe fittings</div>
<div class="t" style="left:38.8px;top:249.06px">Radiators</div>
<div class="t" style="left:38.8px;top:260.94px">Insulation</div>
<div class="t" style="left:38.8px;top:272.81px">Valves and fittings</div>
<svg style="left:19.6px;top:286.15px" width="9.6" height="9.8" viewBox="0 0 9.6 9.8"><path d="M0.6 1.6 V9.2 H8.6 Z" fill="#f3f3f3" stroke="#cfcfcf" stroke-width="0.6"/><path d="M8.2 0.4 L6.8 8 L6.2 9.4 L6 8 L7.4 0.4 Z" fill="#f0b43c" stroke="#c98a1c" stroke-width="0.35"/><path d="M6.4 1.2 L0.8 6.4 M6.4 1.2 L4.6 8.6" stroke="#555" stroke-width="0.7"/><path d="M6.9 0.3 L5.3 1.6 L6.3 2.4 Z" fill="#2a5fb8"/></svg>
<div class="t" style="left:32.8px;top:285.0px">Edit</div>
<svg style="left:19px;top:297.45px" width="11" height="11" viewBox="0 0 11 11"><rect x="0.5" y="0.9" width="7.1" height="9" fill="#fdfdfd" stroke="#c2c2c2" stroke-width="0.8"/><rect x="2" y="3" width="2.4" height="6" fill="#e2e2e2"/><path d="M3.9 5.4 L6.95 3.4 L10 5.4 V9.6 H3.9 Z" fill="#ecd9c6"/><path d="M3.7 5.7 L6.95 3.2 L10.2 5.7 L9.4 4 L6.95 3.3 L4.5 4 Z" fill="#8c8cbc"/><circle cx="6.95" cy="6.2" r="1" fill="#555a5e"/><rect x="3.6" y="9.2" width="6.8" height="1" fill="#b87a4a"/><rect x="6.4" y="8.2" width="1.1" height="2" fill="#3a3030"/></svg>
<div class="t" style="left:32.8px;top:297.5px">Building and surroundings</div>
<div class="t" style="left:38.8px;top:309.69px">Climatic data</div>
<div class="t" style="left:38.8px;top:321.56px">Room data</div>
<svg style="left:19px;top:333.7px" width="11" height="12" viewBox="0 0 11 12"><defs><radialGradient id="sung" cx="0.1" cy="0.5" r="0.9"><stop offset="0" stop-color="#fff04a"/><stop offset="0.45" stop-color="#ffc21c"/><stop offset="1" stop-color="#f2701c"/></radialGradient></defs><path d="M5.2 1.3 A4.75 4.75 0 0 1 5.2 10.8 Z" fill="url(#sung)"/><path d="M4 1.4 V10.7 M0.9 3.6 L5 8.4 M0.9 8.4 L5 3.6 M0.4 6.05 H5 M2.8 2 L4 3.2 M2.8 10.1 L4 8.9" stroke="#27a4de" stroke-width="1" fill="none"/></svg>
<div class="t" style="left:32.8px;top:333.75px">Thermal systems</div>
<div class="a" style="left:29.4px;top:345.79px;width:39.4px;height:11px;background:#ededed"></div><div class="t" style="left:38.8px;top:345.94px;font-weight:bold;color:#000;font-size:6.95px">Sources</div>
<div class="t" style="left:31.4px;top:357.81px">Distribution system</div>
<div class="t" style="left:50.6px;top:369.69px">Virtual connections of radiant systems</div>
<div class="t" style="left:50.6px;top:381.56px">Pipes and insulation - types and default data</div>
<div class="t" style="left:50.6px;top:393.44px">Pipe and insulation sizing options</div>
<div class="t" style="left:50.6px;top:405.31px">Valves and other fittings - types and default data</div>
<div class="t" style="left:31.4px;top:417.19px">Radiant systems</div>
<div class="t" style="left:50.6px;top:429.06px">Floor systems</div>
<div class="t" style="left:50.6px;top:440.94px">Wall systems</div>
<div class="t" style="left:50.6px;top:452.81px">Ceiling systems</div>
<div class="t" style="left:50.6px;top:464.69px">Manifolds, fittings and control</div>
<div class="t" style="left:50.6px;top:476.56px">Coils</div>
<div class="t" style="left:31.4px;top:488.44px">Radiators</div>
<div class="t" style="left:50.6px;top:500.31px">Radiators - types and default data</div>
<div class="t" style="left:50.6px;top:512.19px">Radiator sizing options</div>
<div class="t" style="left:38.8px;top:524.06px">Calculations options</div>
<div class="t" style="left:38.8px;top:535.94px">Results editing options</div>
<svg style="left:19px;top:548.08px" width="11" height="11" viewBox="0 0 11 11"><defs><radialGradient id="rsg" cx="0.4" cy="0.3" r="0.7"><stop offset="0" stop-color="#ffb0a8"/><stop offset="0.4" stop-color="#e03a34"/><stop offset="1" stop-color="#a01410"/></radialGradient></defs><circle cx="2.9" cy="4.1" r="2.8" fill="url(#rsg)"/><path d="M7.6 0.5 L10.4 6.4 H5.6 Z" fill="#2cba34"/><path d="M7.6 0.5 L8.2 6.4 H7 Z" fill="#108a1c"/><path d="M2.9 5.2 L6 4.6 L9 5.2 V9.4 L6 10.6 L2.9 9.4 Z" fill="#2a8cf0"/><path d="M2.9 5.2 L6 6.4 L9 5.2 L6 4.6 Z" fill="#7cc4ff"/><path d="M6 6.4 V10.6" stroke="#9ad0ff" stroke-width="0.6"/></svg>
<div class="t" style="left:32.8px;top:548.12px">Component appearance configuration</div>
<div class="t" style="left:38.8px;top:560.31px">Component styles</div>
<div class="t" style="left:38.8px;top:572.19px">Pipe-runs/pipe feeds</div>
<div class="t" style="left:38.8px;top:584.06px">Magnification scale</div>
<div class="t" style="left:38.8px;top:595.94px">Name patterns</div>
<div class="t" style="left:38.8px;top:607.81px">Expression variables</div>
<svg style="left:0;top:0" width="352" height="648" viewBox="0 0 352 648" fill="#141414"><path d="M10.5 123.4 H14.5 V119.4 Z"/><circle cx="33.4" cy="134.49" r="1.65"/><circle cx="33.4" cy="146.36" r="1.65"/><circle cx="33.4" cy="158.24" r="1.65"/><circle cx="33.4" cy="170.11" r="1.65"/><path d="M10.5 208.4 H14.5 V204.4 Z"/><circle cx="33.4" cy="219.49" r="1.65"/><circle cx="33.4" cy="231.36" r="1.65"/><circle cx="33.4" cy="243.24" r="1.65"/><circle cx="33.4" cy="255.11" r="1.65"/><circle cx="33.4" cy="266.99" r="1.65"/><circle cx="33.4" cy="278.86" r="1.65"/><path d="M10.5 304.65 H14.5 V300.65 Z"/><circle cx="33.4" cy="315.74" r="1.65"/><circle cx="33.4" cy="327.61" r="1.65"/><path d="M10.5 340.9 H14.5 V336.9 Z"/><circle cx="33.4" cy="351.99" r="1.65"/><path d="M22.7 364.96 H26.7 V360.96 Z"/><circle cx="45.3" cy="375.74" r="1.65"/><circle cx="45.3" cy="387.61" r="1.65"/><circle cx="45.3" cy="399.49" r="1.65"/><circle cx="45.3" cy="411.36" r="1.65"/><path d="M22.7 424.34 H26.7 V420.34 Z"/><circle cx="45.3" cy="435.11" r="1.65"/><circle cx="45.3" cy="446.99" r="1.65"/><circle cx="45.3" cy="458.86" r="1.65"/><circle cx="45.3" cy="470.74" r="1.65"/><circle cx="45.3" cy="482.61" r="1.65"/><path d="M22.7 495.59 H26.7 V491.59 Z"/><circle cx="45.3" cy="506.36" r="1.65"/><circle cx="45.3" cy="518.24" r="1.65"/><circle cx="33.4" cy="530.11" r="1.65"/><circle cx="33.4" cy="541.99" r="1.65"/><path d="M10.5 555.28 H14.5 V551.28 Z"/><circle cx="33.4" cy="566.36" r="1.65"/><circle cx="33.4" cy="578.24" r="1.65"/><circle cx="33.4" cy="590.11" r="1.65"/><circle cx="33.4" cy="601.99" r="1.65"/><circle cx="33.4" cy="613.86" r="1.65"/></svg>
<div class="a" id="rp"></div>
<div class="a" id="rph"></div>
<div class="a" style="left:377.6px;top:123px;width:25.2px;height:13px;background:linear-gradient(#f4f4f4,#e9e9e9);border:1px solid #cdcdcd;border-radius:1.5px;box-sizing:border-box"></div>
<svg style="left:380.6px;top:125.6px" width="20" height="8" viewBox="0 0 20 8"><path d="M1.4 3.6 L3.8 0.8 L6.2 3.6 Z M1.4 6.4 L3.8 3.8 L6.2 6.4 Z" fill="none" stroke="#c2c2c2" stroke-width="0.7"/><path d="M12 1.4 L14.4 4 L16.8 1.4 Z M12 4.4 L14.4 7 L16.8 4.4 Z" fill="none" stroke="#c2c2c2" stroke-width="0.7"/><path d="M11.8 0.8 H17" stroke="#c2c2c2" stroke-width="0.6"/><path d="M1.2 7 H6.4" stroke="#c2c2c2" stroke-width="0.6"/></svg>
<svg style="left:361px;top:120px" width="19" height="19" viewBox="0 0 19 19"><circle cx="9.5" cy="9.5" r="9.4" fill="#0478d4"/><path d="M4.1 9.5 L9.2 4.8 V8.5 H15 V10.5 H9.2 V14.2 Z" fill="#fff"/></svg>
<div class="a" style="left:408px;top:117px;width:2px;height:28px;background:linear-gradient(90deg,#ececec,#d8d8d8)"></div>
<div class="a" style="left:418.6px;top:124.2px;font-size:12.35px;font-weight:bold;color:#111;line-height:14px">Thermal systems / Sources</div>
<div class="a" style="left:358.3px;top:155.4px">Default source use</div>
<div class="btn" style="left:358px;top:165.4px;width:181px;height:13px;text-align:left;padding-left:2.6px;line-height:13.2px;border-color:#aaa;background:linear-gradient(#f0f0f0,#e3e3e3)">Heating</div>
<svg style="left:531.2px;top:170.8px" width="4.4" height="3" viewBox="0 0 4.4 3"><path d="M0.1 0.2 H4.3 L2.2 2.8 Z" fill="#111"/></svg>
<div class="grp" style="left:358.8px;top:185.2px;width:179px;height:62px"></div>
<div class="leg" style="left:362.6px;top:180.6px">Heating systems</div>
<div class="a" style="left:363.2px;top:192.4px;line-height:10px"><span class="th">θ</span><sub>s,H</sub></div>
<div class="inp" style="left:363px;top:203.3px;width:76px;height:13.4px;color:#222;background:#fff;line-height:12.200000000000001px">70,0</div>
<svg style="left:432.5px;top:205.2px" width="4.8" height="9.6" viewBox="0 0 4.8 9.6"><path d="M0 3.3 L2.4 0.5 L4.8 3.3 Z" fill="#111"/><path d="M0 6.3 L2.4 9.1 L4.8 6.3 Z" fill="#111"/></svg>
<div class="btn" style="left:440px;top:203.3px;width:26px;height:13.4px;line-height:11.6px;">°C</div>
<div class="a" style="left:363.2px;top:218.4px;line-height:10px">∆<span class="th">θ</span><sub>s,H</sub></div>
<div class="inp" style="left:363px;top:229.4px;width:76px;height:13.4px;color:#222;background:#fff;line-height:12.200000000000001px">20,0</div>
<svg style="left:432.5px;top:231.3px" width="4.8" height="9.6" viewBox="0 0 4.8 9.6"><path d="M0 3.3 L2.4 0.5 L4.8 3.3 Z" fill="#111"/><path d="M0 6.3 L2.4 9.1 L4.8 6.3 Z" fill="#111"/></svg>
<div class="btn" style="left:440px;top:229.4px;width:26px;height:13.4px;line-height:11.6px;">K</div>
<div class="grp" style="left:358.8px;top:255px;width:179px;height:54px"></div>
<div class="leg" style="left:362.6px;top:250.4px">Radiant heating systems</div>
<svg style="left:363px;top:261px" width="8" height="18" viewBox="0 0 8 18"><circle cx="3.7" cy="4" r="3" fill="#fff" stroke="#6a6a6a" stroke-width="0.65"/><circle cx="3.7" cy="13.5" r="3" fill="#fff" stroke="#6a6a6a" stroke-width="0.65"/><circle cx="3.7" cy="13.5" r="1.45" fill="#3a3a3a"/></svg>
<div class="a" style="left:373.2px;top:260.2px;font-size:7.53px">Optimize supply temperature</div>
<div class="a" style="left:373.2px;top:270px;font-size:7.53px">Impose supply temperature</div>
<div class="a" style="left:363.2px;top:280.8px;line-height:10px"><span class="th">θ</span><sub>s,H rad</sub></div>
<div class="inp" style="left:363px;top:291.4px;width:76px;height:12.8px;color:#222;background:#fff;line-height:11.600000000000001px">40,0</div>
<svg style="left:432.5px;top:293.0px" width="4.8" height="9.6" viewBox="0 0 4.8 9.6"><path d="M0 3.3 L2.4 0.5 L4.8 3.3 Z" fill="#111"/><path d="M0 6.3 L2.4 9.1 L4.8 6.3 Z" fill="#111"/></svg>
<div class="btn" style="left:440px;top:291.4px;width:26px;height:12.8px;line-height:11.0px;">°C</div>
<svg style="left:350px;top:240px" width="200" height="80" viewBox="0 0 200 80"><rect x="6.7" y="9.2" width="185.3" height="63.8" fill="none" stroke="#ea1c24" stroke-width="2"/></svg>
<div class="bh" style="left:358px;top:316.2px;width:361.2px;height:14.7px;line-height:15.4px;font-size:8.7px">Control circuits</div>
<div class="a" style="left:358px;top:334.2px;width:360.4px;height:44.6px;background:#fff;border:1px solid #c2c2c2;box-sizing:border-box"></div>
<div class="a" style="left:359px;top:335.2px;width:358.4px;height:15.8px;background:#bcd4e9"></div>
<div class="c" style="left:426px;top:339px">Name</div>
<div class="c" style="left:540.6px;top:338px;line-height:10px"><span class="th">θ</span><sub>s,H</sub></div>
<div class="c" style="left:628.4px;top:338px;line-height:10px"><span class="th">θ</span><sub>s,C</sub></div>
<div class="a" style="left:374.2px;top:351px;width:1px;height:26.2px;background:#e4e4e4"></div>
<div class="a" style="left:654.2px;top:351px;width:1px;height:26.2px;background:#e4e4e4"></div>
<svg style="left:360.2px;top:359.3px" width="9.6" height="9.6" viewBox="0 0 9.6 9.6"><defs><radialGradient id="og" cx="0.5" cy="0.5" r="0.5"><stop offset="0" stop-color="#fffac0"/><stop offset="0.3" stop-color="#ffe45a"/><stop offset="0.5" stop-color="#f9a428"/><stop offset="0.8" stop-color="#f28414"/><stop offset="1" stop-color="#f28414" stop-opacity="0.1"/></radialGradient></defs><circle cx="4.8" cy="4.8" r="4.8" fill="url(#og)"/></svg>
<div class="a" style="left:376.6px;top:355.4px;font-size:7.58px">Control circuit:</div>
<div class="a" style="left:376.6px;top:364.6px;font-weight:bold;color:#111">1</div>
<div class="a" style="left:479px;top:351px;width:123px;height:26.2px;background:#bcd4e9"></div>
<div class="a" style="left:482.4px;top:359.2px;width:8.6px;height:8.6px;background:#fff;border:1px solid #b0b0b0;box-sizing:border-box"></div>
<div class="a" style="left:494.2px;top:359.4px;font-size:7.58px">Optimize</div>
<div class="inp" style="left:527px;top:357px;width:30.8px;height:14px;color:#2a2cc0;background:#eff4fc;line-height:12.8px">40,0</div>
<svg style="left:551.3px;top:359.2px" width="4.8" height="9.6" viewBox="0 0 4.8 9.6"><path d="M0 3.3 L2.4 0.5 L4.8 3.3 Z" fill="#1c2a9c"/><path d="M0 6.3 L2.4 9.1 L4.8 6.3 Z" fill="#1c2a9c"/></svg>
<div class="btn" style="left:559.4px;top:357px;width:13.6px;height:14px;background:#ececec;border-color:#b8b8b8"></div>
<svg style="left:561px;top:358.4px" width="11" height="11.5" viewBox="0 0 11 11.5"><defs><linearGradient id="scr" x1="0" y1="0" x2="1" y2="1"><stop offset="0" stop-color="#ffffff"/><stop offset="1" stop-color="#c4e2fa"/></linearGradient></defs><rect x="7.1" y="0.3" width="3.4" height="8.6" rx="0.7" fill="#56bcf2" stroke="#2aa2e6" stroke-width="0.4"/><path d="M8.9 1.3 V4.8" stroke="#c8eafc" stroke-width="0.5"/><circle cx="8.9" cy="6.9" r="0.6" fill="#fff"/><rect x="0.5" y="2.3" width="7.2" height="5.2" rx="0.8" fill="url(#scr)" stroke="#1a9ee6" stroke-width="0.95"/><ellipse cx="4.1" cy="8" rx="1.5" ry="0.55" fill="#0a58b0"/><path d="M1.7 9.3 H7 L7.6 10.9 H1.1 Z" fill="#9aa6b0" stroke="#2aa2e6" stroke-width="0.5"/></svg>
<svg style="left:470px;top:340px" width="140" height="45" viewBox="0 0 140 45"><rect x="8.7" y="9.7" width="123.3" height="27.3" fill="none" stroke="#ea1c24" stroke-width="2"/></svg>
<div class="a" style="left:655.8px;top:353.2px;width:59px;height:22.2px;background:#f4f4f4;border:1px solid #d4d4d4;box-sizing:border-box"></div>
<div class="a" style="left:657.6px;top:355.7px;color:#8a8a8a;line-height:9px;font-size:7.48px">Change to<br>physical element</div>
<div class="bh" style="left:358px;top:385px;width:361.2px;height:18.6px;line-height:19px;font-size:8.7px"><span style="position:relative;left:-5.6px">Advanced settings</span></div>
<svg style="left:702.8px;top:388.8px" width="11" height="11" viewBox="0 0 11 11"><circle cx="5.5" cy="5.5" r="5.3" fill="#fdfdfd" stroke="#c8d4e0" stroke-width="0.4"/><path d="M3.4 4.6 L5.5 6.8 L7.6 4.6" fill="none" stroke="#111" stroke-width="1.1"/></svg>
<div class="a" style="left:358.3px;top:408.8px">Default available pressure difference</div>
<div class="inp" style="left:358px;top:418.8px;width:75.8px;height:13.8px;color:#2a2cc0;background:#e9f0fb;line-height:12.600000000000001px">(size)</div>
<svg style="left:427.3px;top:420.9px" width="4.8" height="9.6" viewBox="0 0 4.8 9.6"><path d="M0 3.3 L2.4 0.5 L4.8 3.3 Z" fill="#1c2a9c"/><path d="M0 6.3 L2.4 9.1 L4.8 6.3 Z" fill="#8a96d4"/></svg>
<div class="btn" style="left:435.2px;top:418.8px;width:25.4px;height:13.8px;line-height:12.0px;">kPa</div>
<div class="btn" style="left:462.2px;top:418.8px;width:13.8px;height:13.8px;background:#ececec;border-color:#b8b8b8"></div>
<svg style="left:463.8px;top:420px" width="11" height="11.5" viewBox="0 0 11 11.5"><defs><linearGradient id="scr" x1="0" y1="0" x2="1" y2="1"><stop offset="0" stop-color="#ffffff"/><stop offset="1" stop-color="#c4e2fa"/></linearGradient></defs><rect x="7.1" y="0.3" width="3.4" height="8.6" rx="0.7" fill="#56bcf2" stroke="#2aa2e6" stroke-width="0.4"/><path d="M8.9 1.3 V4.8" stroke="#c8eafc" stroke-width="0.5"/><circle cx="8.9" cy="6.9" r="0.6" fill="#fff"/><rect x="0.5" y="2.3" width="7.2" height="5.2" rx="0.8" fill="url(#scr)" stroke="#1a9ee6" stroke-width="0.95"/><ellipse cx="4.1" cy="8" rx="1.5" ry="0.55" fill="#0a58b0"/><path d="M1.7 9.3 H7 L7.6 10.9 H1.1 Z" fill="#9aa6b0" stroke="#2aa2e6" stroke-width="0.5"/></svg>

</body></html>
